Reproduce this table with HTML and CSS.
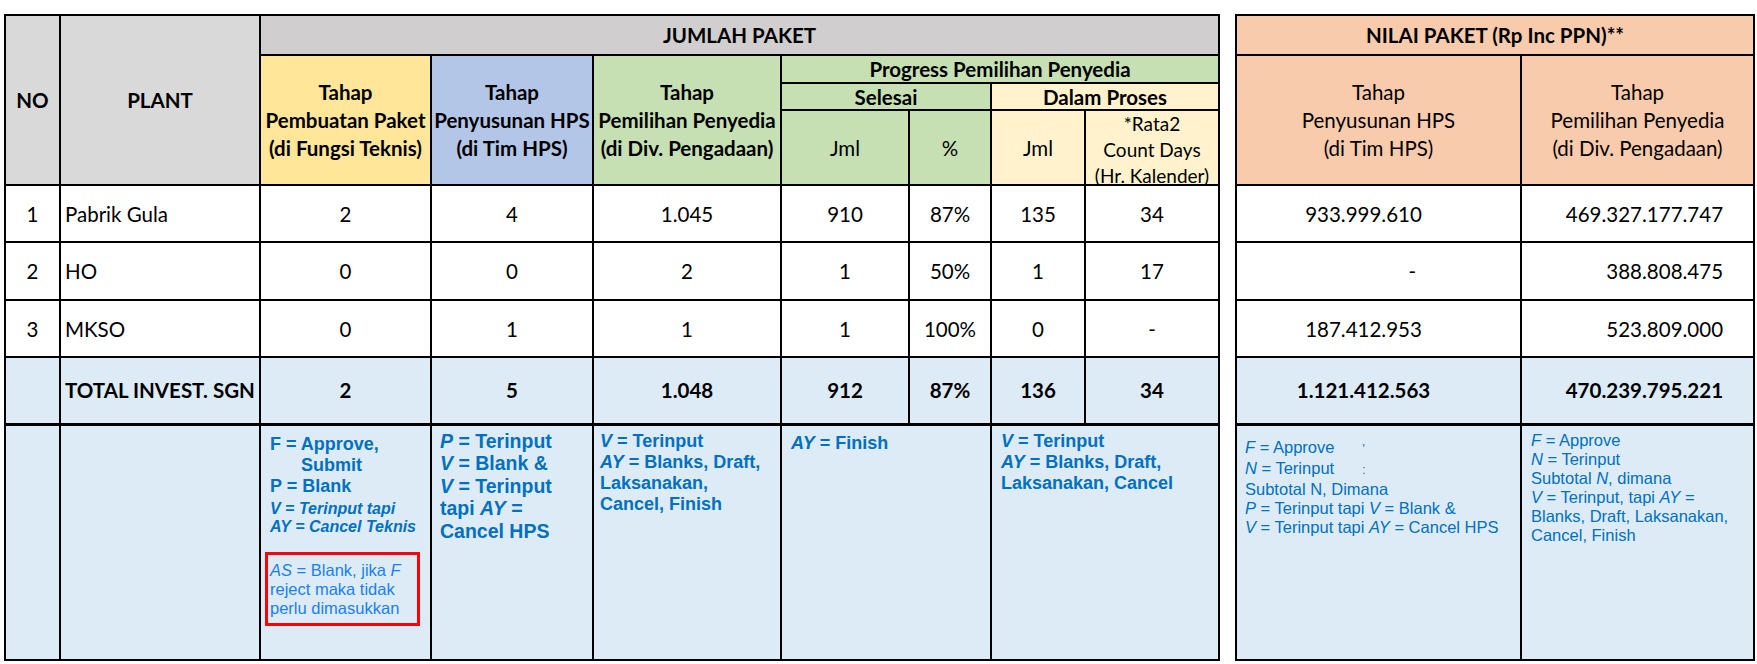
FILE: index.html
```html
<!DOCTYPE html>
<html lang="id">
<head>
<meta charset="utf-8">
<title>Rekap Paket</title>
<link rel="stylesheet" href="styles.css">
</head>
<body>
<table class="report">
  <colgroup>
    <col class="c-no"><col class="c-plant"><col class="c-t1"><col class="c-t2"><col class="c-t3">
    <col class="c-jml"><col class="c-pct"><col class="c-jml2"><col class="c-rata">
    <col class="c-gap"><col class="c-n1"><col class="c-n2">
  </colgroup>
  <tr class="r-h1">
    <th rowspan="4" class="bg-grey">NO</th>
    <th rowspan="4" class="bg-grey">PLANT</th>
    <th colspan="7" class="bg-dark">JUMLAH PAKET</th>
    <td rowspan="9" class="gap"></td>
    <th colspan="2" class="bg-peach">NILAI PAKET (Rp Inc PPN)**</th>
  </tr>
  <tr class="r-h2">
    <th rowspan="3" class="bg-yellow ml">Tahap<br>Pembuatan Paket<br>(di Fungsi Teknis)</th>
    <th rowspan="3" class="bg-blue ml">Tahap<br>Penyusunan HPS<br>(di Tim HPS)</th>
    <th rowspan="3" class="bg-green ml">Tahap<br>Pemilihan Penyedia<br>(di Div. Pengadaan)</th>
    <th colspan="4" class="bg-green">Progress Pemilihan Penyedia</th>
    <th rowspan="3" class="bg-peach ml reg">Tahap<br>Penyusunan HPS<br>(di Tim HPS)</th>
    <th rowspan="3" class="bg-peach ml reg">Tahap<br>Pemilihan Penyedia<br>(di Div. Pengadaan)</th>
  </tr>
  <tr class="r-h3">
    <th colspan="2" class="bg-green">Selesai</th>
    <th colspan="2" class="bg-cream">Dalam Proses</th>
  </tr>
  <tr class="r-h4">
    <th class="bg-green reg">Jml</th>
    <th class="bg-green reg">%</th>
    <th class="bg-cream reg">Jml</th>
    <th class="bg-cream reg rata"><div class="rata-box">*Rata2<br>Count Days<br>(Hr. Kalender)</div></th>
  </tr>
  <tr class="r-data">
    <td>1</td><td class="name">Pabrik Gula</td><td>2</td><td>4</td><td>1.045</td>
    <td>910</td><td>87%</td><td>135</td><td>34</td>
    <td class="v1">933.999.610</td><td class="v2">469.327.177.747</td>
  </tr>
  <tr class="r-data r-data2">
    <td>2</td><td class="name">HO</td><td>0</td><td>0</td><td>2</td>
    <td>1</td><td>50%</td><td>1</td><td>17</td>
    <td class="v1 dash">-</td><td class="v2">388.808.475</td>
  </tr>
  <tr class="r-data">
    <td>3</td><td class="name">MKSO</td><td>0</td><td>1</td><td>1</td>
    <td>1</td><td>100%</td><td>0</td><td>-</td>
    <td class="v1">187.412.953</td><td class="v2">523.809.000</td>
  </tr>
  <tr class="r-total">
    <td></td><td class="name">TOTAL INVEST. SGN</td><td>2</td><td>5</td><td>1.048</td>
    <td>912</td><td>87%</td><td>136</td><td>34</td>
    <td class="v1">1.121.412.563</td><td class="v2">470.239.795.221</td>
  </tr>
  <tr class="r-notes">
    <td></td>
    <td></td>
    <td class="note n-t1">
      <div class="b18">
        <p>F = Approve,</p>
        <p class="indent">Submit</p>
        <p>P = Blank</p>
      </div>
      <div class="bi16">
        <p>V = Terinput tapi</p>
        <p>AY = Cancel Teknis</p>
      </div>
      <div class="redbox">
        <p><i>AS</i> = Blank, jika <i>F</i></p>
        <p>reject maka tidak</p>
        <p>perlu dimasukkan</p>
      </div>
    </td>
    <td class="note n-t2 b20">
      <p><i>P</i> = Terinput</p>
      <p><i>V</i> = Blank &amp;</p>
      <p><i>V</i> = Terinput</p>
      <p>tapi <i>AY</i> =</p>
      <p>Cancel HPS</p>
    </td>
    <td class="note n-t3 b18">
      <p><i>V</i> = Terinput</p>
      <p><i>AY</i> = Blanks, Draft,</p>
      <p>Laksanakan,</p>
      <p>Cancel, Finish</p>
    </td>
    <td colspan="2" class="note n-sel b18">
      <p><i>AY</i> = Finish</p>
    </td>
    <td colspan="2" class="note n-dp b18">
      <p><i>V</i> = Terinput</p>
      <p><i>AY</i> = Blanks, Draft,</p>
      <p>Laksanakan, Cancel</p>
    </td>
    <td class="note n-v1 r16">
      <p><i>F</i> = Approve<span class="tick">'</span></p>
      <p><i>N</i> = Terinput<span class="tick">:</span></p>
      <p>Subtotal N, Dimana</p>
      <p><i>P</i> = Terinput tapi <i>V</i> = Blank &amp;</p>
      <p><i>V</i> = Terinput tapi <i>AY</i> = Cancel HPS</p>
    </td>
    <td class="note n-v2 r16">
      <p><i>F</i> = Approve</p>
      <p><i>N</i> = Terinput</p>
      <p>Subtotal <i>N</i>, dimana</p>
      <p><i>V</i> = Terinput, tapi <i>AY</i> =</p>
      <p>Blanks, Draft, Laksanakan,</p>
      <p>Cancel, Finish</p>
    </td>
  </tr>
</table>
</body>
</html>
```

FILE: styles.css
```css
html, body {
  margin: 0;
  background: #ffffff;
}
body {
  padding: 14px 0 0 4px;
  font-family: "Lato", "Open Sans", sans-serif;
  color: #000;
}

.report {
  border-collapse: collapse;
  table-layout: fixed;
  width: 1751px;
  font-size: 20.5px;
}

.c-no { width: 55px; }
.c-plant { width: 200px; }
.c-t1 { width: 171px; }
.c-t2 { width: 162px; }
.c-t3 { width: 188px; }
.c-jml { width: 128px; }
.c-pct { width: 82px; }
.c-jml2 { width: 94px; }
.c-rata { width: 134px; }
.c-gap { width: 17px; }
.c-n1 { width: 285px; }
.c-n2 { width: 233px; }

.report th,
.report td {
  border: 2px solid #000;
  padding: 0;
  text-align: center;
  vertical-align: middle;
  white-space: nowrap;
  overflow: hidden;
}

.report th { font-weight: 700; }
.report th.reg { font-weight: 400; }
.report th.ml { line-height: 28px; }

.rata-box {
  height: 70px;
  display: flex;
  flex-direction: column;
  justify-content: center;
  font-size: 19px;
  line-height: 26px;
  padding-top: 4px;
  box-sizing: border-box;
  overflow: visible;
}

.report td.gap {
  border: none;
  background: #ffffff;
}

.r-h1 { height: 40px; }
.r-h2 { height: 28px; }
.r-h3 { height: 27px; }
.r-h4 { height: 75px; }
.r-data { height: 57px; }
.r-data2 { height: 58px; }
.r-total { height: 67px; }
.r-notes { height: 236px; }

.bg-grey { background: #d9d9d9; }
.bg-dark { background: #d0cece; }
.bg-yellow { background: #ffe699; }
.bg-blue { background: #b4c6e7; }
.bg-green { background: #c6e0b4; }
.bg-cream { background: #fff2cc; }
.bg-peach { background: #f8cbad; }

.report td.name {
  text-align: left;
  padding-left: 4px;
}

.report td.v1 { padding-right: 30px; }
.report td.v1.dash { text-align: right; padding-right: 104px; }
.report td.v2 { text-align: right; padding-right: 30px; }

.r-total td {
  background: #ddebf7;
  font-weight: 700;
  border-bottom-width: 3px;
}

.r-notes td {
  background: #ddebf7;
  vertical-align: top;
}

.report td.note {
  text-align: left;
  font-family: "Liberation Sans", Arial, sans-serif;
  color: #0070c0;
}
.note p { margin: 0; }

.b18 { font-size: 18px; line-height: 21px; font-weight: 700; }
.b20 { font-size: 19.5px; line-height: 22.5px; font-weight: 700; }
.bi16 { font-size: 16px; line-height: 18.5px; font-weight: 700; font-style: italic; }
.r16 { font-size: 16.5px; line-height: 19px; font-weight: 400; }

.report td.n-t1 { padding: 8px 0 0 4px; }
.n-t1 .b18, .n-t1 .bi16 { padding-left: 5px; }
.n-t1 .bi16 { margin-top: 3px; }
.n-t1 .indent { padding-left: 31px; }

.redbox {
  margin-top: 15px;
  border: 3px solid #ff0000;
  padding: 6px 0 0 2px;
  box-sizing: border-box;
  width: 155px;
  height: 74px;
  font-size: 16.5px;
  line-height: 19px;
  color: #1a80f0;
}

.report td.n-t2 { padding: 4px 0 0 8px; }
.report td.n-t3 { padding: 5px 0 0 6px; }
.report td.n-sel { padding: 7px 0 0 9px; }
.report td.n-dp { padding: 5px 0 0 9px; }
.report td.n-v1 { padding: 12px 0 0 8px; }
.report td.n-v2 { padding: 5px 0 0 9px; }

.tick {
  display: inline-block;
  margin-left: 28px;
  font-size: 12px;
  font-style: normal;
}
```
